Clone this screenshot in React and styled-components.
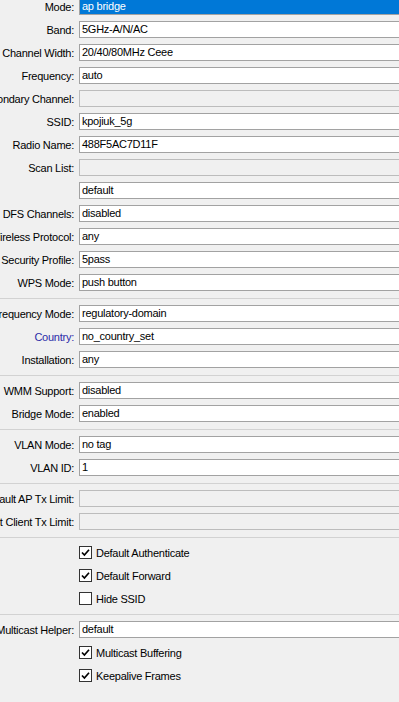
import React from 'react';
import styled, { createGlobalStyle } from 'styled-components';

const GlobalStyle = createGlobalStyle`
  html, body {
    margin: 0;
    padding: 0;
    background: #f0f0f0;
    overflow: hidden;
  }
  body {
    font-family: "Liberation Sans", Arial, sans-serif;
    font-size: 11px;
    letter-spacing: -0.25px;
    color: #000;
  }
`;

const Page = styled.div`
  display: flex;
  flex-direction: column;
  width: 399px;
  height: 702px;
  margin-top: -5px;
`;

const Row = styled.div`
  display: grid;
  grid-template-columns: 74px 1fr;
  column-gap: 5px;
  height: 23px;
  align-items: center;
`;

const Label = styled.div`
  display: flex;
  justify-content: flex-end;
  white-space: nowrap;
  color: ${({ $link }) => ($link ? '#2b2ba8' : '#000')};
`;

const Field = styled.div`
  box-sizing: border-box;
  height: 17px;
  border: 1px solid ${({ $disabled }) => ($disabled ? '#bcbcbc' : '#a2a2a2')};
  border-right: none;
  background: ${({ $disabled, $selected }) =>
    $selected ? '#0078d7' : $disabled ? '#f0f0f0' : '#fff'};
  color: ${({ $selected }) => ($selected ? '#fff' : '#000')};
  padding-left: 2px;
  line-height: 15px;
  white-space: nowrap;
  overflow: hidden;
`;

const Divider = styled.div`
  height: 1px;
  margin: 4px 0 3px;
  background: #d2d2d2;
`;

const CheckWrap = styled.label`
  display: flex;
  align-items: center;
  gap: 4px;
  white-space: nowrap;
`;

const Box = styled.span`
  box-sizing: border-box;
  width: 13px;
  height: 13px;
  border: 1px solid #333;
  background: #fff;
  display: flex;
  align-items: center;
  justify-content: center;
`;

function Check({ checked, text }) {
  return (
    <Row>
      <span />
      <CheckWrap>
        <Box>
          {checked && (
            <svg width="11" height="11" viewBox="0 0 11 11">
              <path d="M2 5.5 L4.4 8 L9 2.8" fill="none" stroke="#000" strokeWidth="1.7" />
            </svg>
          )}
        </Box>
        {text}
      </CheckWrap>
    </Row>
  );
}

function Item({ label, value, disabled, selected, link }) {
  return (
    <Row>
      <Label $link={link}>{label}</Label>
      <Field $disabled={disabled} $selected={selected}>{value}</Field>
    </Row>
  );
}

export default function App() {
  return (
    <>
      <GlobalStyle />
      <Page>
        <Item label="Mode:" value="ap bridge" selected />
        <Item label="Band:" value="5GHz-A/N/AC" />
        <Item label="Channel Width:" value="20/40/80MHz Ceee" />
        <Item label="Frequency:" value="auto" />
        <Item label="Secondary Channel:" disabled />
        <Item label="SSID:" value="kpojiuk_5g" />
        <Item label="Radio Name:" value="488F5AC7D11F" />
        <Item label="Scan List:" disabled />
        <Item label="" value="default" />
        <Item label="DFS Channels:" value="disabled" />
        <Item label="Wireless Protocol:" value="any" />
        <Item label="Security Profile:" value="5pass" />
        <Item label="WPS Mode:" value="push button" />
        <Divider />
        <Item label="Frequency Mode:" value="regulatory-domain" />
        <Item label="Country:" value="no_country_set" link />
        <Item label="Installation:" value="any" />
        <Divider />
        <Item label="WMM Support:" value="disabled" />
        <Item label="Bridge Mode:" value="enabled" />
        <Divider />
        <Item label="VLAN Mode:" value="no tag" />
        <Item label="VLAN ID:" value="1" />
        <Divider />
        <Item label="Default AP Tx Limit:" disabled />
        <Item label="Default Client Tx Limit:" disabled />
        <Divider />
        <Check checked text="Default Authenticate" />
        <Check checked text="Default Forward" />
        <Check text="Hide SSID" />
        <Divider />
        <Item label="Multicast Helper:" value="default" />
        <Check checked text="Multicast Buffering" />
        <Check checked text="Keepalive Frames" />
      </Page>
    </>
  );
}
